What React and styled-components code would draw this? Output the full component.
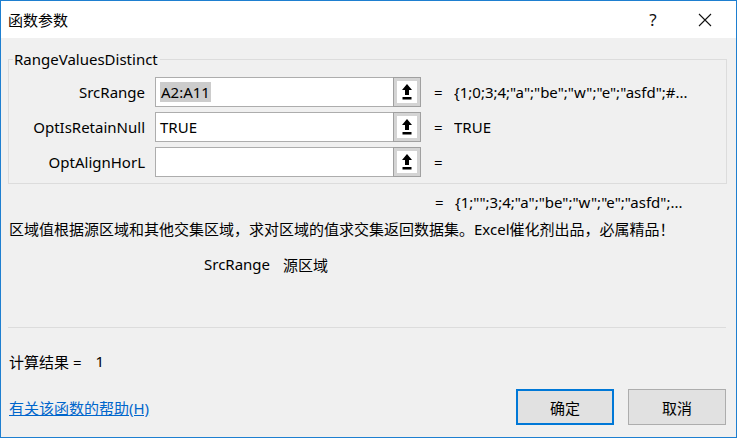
import React from 'react';
import styled, { createGlobalStyle } from 'styled-components';

const GlobalStyle = createGlobalStyle`
  html, body { margin: 0; padding: 0; }
  body {
    width: 737px;
    height: 438px;
    overflow: hidden;
    font-family: "Noto Sans", "Noto Sans CJK SC", sans-serif;
    font-size: 15px;
    color: #000;
  }
`;

const Window = styled.div`
  width: 737px;
  height: 438px;
  box-sizing: border-box;
  border: 1px solid #1e7fd0;
  display: flex;
  flex-direction: column;
  background: #f0f0f0;
`;

const TitleBar = styled.div`
  height: 37px;
  background: #fff;
  display: flex;
  align-items: center;
  padding: 0 0 0 7px;
  .title { flex: 1; font-size: 15px; }
`;

const TitleBtn = styled.div`
  width: ${p => p.w || 46}px;
  height: 36px;
  display: flex;
  align-items: center;
  justify-content: center;
  font-size: 17px;
  color: #111;
`;

const Body = styled.div`
  flex: 1;
  display: flex;
  flex-direction: column;
  padding: 11px 9px 0 7px;
`;

const Group = styled.fieldset`
  margin: 0;
  padding: 8px 0 6px 0;
  border: 1px solid #dcdcdc;
  border-radius: 0;
  display: grid;
  grid-template-columns: 146px 238px 27px 14px 20px 1fr;
  grid-auto-rows: 30px;
  row-gap: 5px;
  align-items: center;
  legend {
    margin-left: 4px;
    padding: 0 2px 0 1px;
    font-size: 15px;
    line-height: 20px;
  }
`;

const Label = styled.div`
  text-align: right;
  padding-right: 10px;
  white-space: nowrap;
`;

const Input = styled.div`
  height: 30px;
  box-sizing: border-box;
  background: #fff;
  border: 1px solid #adadad;
  border-right: none;
  display: flex;
  align-items: center;
  padding-left: 4px;
  span.sel { background: #cccccc; padding: 0 1px; }
`;

const RefButton = styled.div`
  width: 28px;
  height: 30px;
  box-sizing: border-box;
  border: 1px solid #a0a0a0;
  background: #fff;
  box-shadow: inset 0 0 0 3px #d4d4d4;
  display: flex;
  align-items: center;
  justify-content: center;
`;

const Eq = styled.div`
  text-align: left;
`;

const Value = styled.div`
  white-space: nowrap;
  overflow: hidden;
`;

const ResultLine = styled.div`
  display: flex;
  margin-top: 7px;
  padding-left: 427px;
  height: 22px;
  align-items: center;
  span.eq { width: 20px; }
`;

const Desc = styled.div`
  margin-top: 4px;
  height: 22px;
  display: flex;
  align-items: center;
  padding-left: 1px;
`;

const ArgHelp = styled.div`
  margin-top: 14px;
  padding-left: 196px;
  height: 22px;
  display: flex;
  align-items: center;
  gap: 13px;
`;

const Separator = styled.div`
  margin-top: 52px;
  border-top: 1px solid #dcdcdc;
  margin-right: 1px;
`;

const ResultRow = styled.div`
  margin-top: 22px;
  height: 22px;
  display: flex;
  align-items: center;
  padding-left: 1px;
  gap: 14px;
`;

const Footer = styled.div`
  margin-top: 17px;
  margin-right: 1px;
  display: flex;
  align-items: center;
`;

const HelpLink = styled.a`
  flex: 1;
  color: #0066cc;
  text-decoration: underline;
  padding-left: 1px;
`;

const Button = styled.div`
  width: 98px;
  height: 36px;
  box-sizing: border-box;
  margin-left: 14px;
  background: #e1e1e1;
  border: ${p => (p.primary ? '2px solid #0078d7' : '1px solid #adadad')};
  display: flex;
  align-items: center;
  justify-content: center;
`;

const ArrowIcon = () => (
  <svg width="12" height="18" viewBox="0 0 12 18">
    <path d="M6 1 L11 7 H8 V12 H4 V7 H1 Z" fill="#000" />
    <rect x="1.5" y="14" width="9" height="2.5" fill="#000" />
  </svg>
);

const CloseIcon = () => (
  <svg width="14" height="14" viewBox="0 0 14 14">
    <path d="M1 1 L13 13 M13 1 L1 13" stroke="#111" strokeWidth="1.1" />
  </svg>
);

const rows = [
  { name: 'SrcRange', value: 'A2:A11', selected: true, result: '{1;0;3;4;"a";"be";"w";"e";"asfd";#...' },
  { name: 'OptIsRetainNull', value: 'TRUE', result: 'TRUE' },
  { name: 'OptAlignHorL', value: '', result: '' },
];

export default function App() {
  return (
    <>
      <GlobalStyle />
      <Window>
        <TitleBar>
          <div className="title">函数参数</div>
          <TitleBtn w={42}>?</TitleBtn>
          <TitleBtn w={62}><CloseIcon /></TitleBtn>
        </TitleBar>
        <Body>
          <Group>
            <legend>RangeValuesDistinct</legend>
            {rows.map(r => (
              <React.Fragment key={r.name}>
                <Label>{r.name}</Label>
                <Input>{r.selected ? <span className="sel">{r.value}</span> : r.value}</Input>
                <RefButton><ArrowIcon /></RefButton>
                <div />
                <Eq>=</Eq>
                <Value>{r.result}</Value>
              </React.Fragment>
            ))}
          </Group>
          <ResultLine>
            <span className="eq">=</span>
            <span>{'{1;"";3;4;"a";"be";"w";"e";"asfd";...'}</span>
          </ResultLine>
          <Desc>区域值根据源区域和其他交集区域，求对区域的值求交集返回数据集。Excel催化剂出品，必属精品！</Desc>
          <ArgHelp>
            <span>SrcRange</span>
            <span>源区域</span>
          </ArgHelp>
          <Separator />
          <ResultRow>
            <span>计算结果 =</span>
            <span>1</span>
          </ResultRow>
          <Footer>
            <HelpLink>有关该函数的帮助(H)</HelpLink>
            <Button primary>确定</Button>
            <Button>取消</Button>
          </Footer>
        </Body>
      </Window>
    </>
  );
}
